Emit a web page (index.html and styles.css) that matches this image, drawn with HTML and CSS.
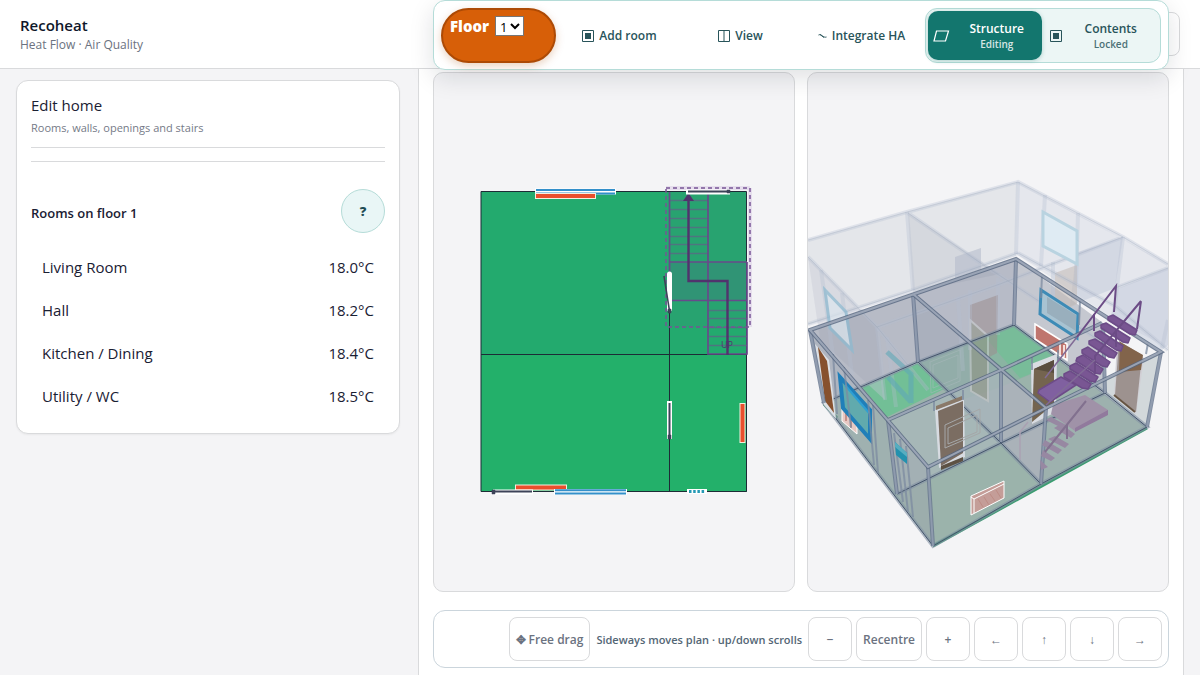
FILE: index.html
```html
<!DOCTYPE html>
<html lang="en">
<head>
<meta charset="utf-8">
<title>Recoheat</title>
<link rel="stylesheet" href="styles.css">
</head>
<body>
<header class="topbar">
  <div class="brand">
    <h1 class="brand-name">Recoheat</h1>
    <p class="brand-sub">Heat Flow · Air Quality</p>
  </div>
  <button class="account" aria-label="Account"></button>
</header>
<div class="layout">
  <aside class="side">
    <section class="card">
      <h2 class="card-title">Edit home</h2>
      <p class="card-sub">Rooms, walls, openings and stairs</p>
      <div class="divider"></div>
      <div class="rooms-head">
        <h3 class="rooms-title">Rooms on floor 1</h3>
        <button class="help">?</button>
      </div>
      <ul class="rooms">
        <li class="room"><span>Living Room</span><span>18.0°C</span></li>
        <li class="room"><span>Hall</span><span>18.2°C</span></li>
        <li class="room"><span>Kitchen / Dining</span><span>18.4°C</span></li>
        <li class="room"><span>Utility / WC</span><span>18.5°C</span></li>
      </ul>
    </section>
  </aside>
  <main class="work">
    <nav class="toolbar">
      <div class="floor">
        <label for="floor">Floor</label>
        <select id="floor" class="floor-select"><option>1</option><option>2</option></select>
      </div>
      <button class="tool"><svg width="12" height="12" viewBox="0 0 12 12"><path d="M.5.5h11v11H.5z" fill="none" stroke="currentColor"/><path d="M3 3h6v6H3z" fill="currentColor"/></svg>Add room</button>
      <button class="tool"><svg width="12" height="12" viewBox="0 0 12 12"><path d="M.5.5h11v11H.5zM6 .5v11" fill="none" stroke="currentColor"/></svg>View</button>
      <button class="tool"><svg width="9" height="12" viewBox="0 0 9 12"><path d="M.5 5c2-1 2.500 0 4 1s2.500 1.500 4 1M2 4.500l4 3" fill="none" stroke="currentColor"/></svg>Integrate HA</button>
      <div class="modes">
        <button class="mode mode-on"><svg width="17" height="12" viewBox="0 0 17 12"><path d="M3.500 1h12l-3 10H1z" fill="none" stroke="currentColor" stroke-width="1.200"/></svg><span class="mode-text">Structure<small class="mode-state">Editing</small></span></button>
        <button class="mode"><svg width="12" height="12" viewBox="0 0 12 12"><path d="M.5.5h11v11H.5z" fill="none" stroke="currentColor"/><path d="M3 3h6v6H3z" fill="currentColor"/></svg><span class="mode-text">Contents<small class="mode-state">Locked</small></span></button>
      </div>
    </nav>
    <div class="views">
      <div class="view">
        <svg class="drawing" viewBox="434 73 360 518" role="img" aria-label="Floor plan">
          <path d="M481 192H747V354H481z" fill="#23aa6e"/>
          <path d="M481 354H747V492H481z" fill="#23b06a"/>
          <path d="M481 191.500H746.500V491.500H481zM481 354.500H747M669.500 192V492" fill="none" stroke="#1d2b36"/>
          <path d="M670 192h77v135h-77z" fill="#714b93" opacity=".07"/>
          <path d="M670 262h77v39h-77z" fill="#5c4a8c" opacity=".16"/>
          <path d="M670 200.500h38M670 209.500h38M670 218.500h38M670 227.500h38M670 236.500h38M670 244.500h38M670 253.500h38M709 310.500h38M709 318.500h38M709 327.500h38M709 336.500h38M709 345.500h38" stroke="#4f7480" stroke-width="1.400"/>
          <path d="M669.500 192v82M708 192v162h39v-92M669 262h78M669 300.500h78" fill="none" stroke="#684a8b" stroke-width="1.700"/>
          <path d="M748 188h4v139h-4zM666 186h84v4h-84z" fill="#e6deed"/>
          <rect x="666" y="188" width="84" height="139" fill="none" stroke="#775495" stroke-width="1.500" stroke-dasharray="4 3"/>
          <path d="M727.500 355v-74H688.500v-82" fill="none" stroke="#51336d" stroke-width="2.400"/>
          <path d="M683 201l5.500-8 5.500 8z" fill="#51336d"/>
          <text x="727" y="348" class="up">UP</text>
          <g fill="none">
            <path d="M535 191.500h81" stroke="#fff" stroke-width="6"/>
            <path d="M536 190h79M536 193.500h79" stroke="#338fca" stroke-width="2"/>
            <path d="M535 196h61M515 487.500h52M742.500 403v40" stroke="#f4efdf" stroke-width="6"/>
            <path d="M536 196h59M516 487.500h50M742.500 404v38" stroke="#e94f2d" stroke-width="4"/>
            <path d="M686 192h44M493 492h40M669.500 401v38" stroke="#fff" stroke-width="5"/>
            <path d="M688 191.500h41M494 491.500h38M669.500 403v34" stroke="#3d4358" stroke-width="2"/>
            <path d="M669.500 274v35" stroke="#fff" stroke-width="5" stroke-linecap="round"/>
            <path d="M664 276l5.500 35" stroke="#3d4358" stroke-width="1.600"/>
            <path d="M554 492h73" stroke="#fff" stroke-width="6"/>
            <path d="M555 490.300h71M555 493.500h71" stroke="#338fca" stroke-width="2"/>
            <path d="M687 491.500h20" stroke="#fff" stroke-width="5"/>
            <path d="M689 491.500h16" stroke="#2599b5" stroke-width="3" stroke-dasharray="2.500 1.700"/>
          </g>
          <path d="M727 190h3v3h-3zM668 309h3v4h-3zM668 435h3v4h-3zM492 490h3v4h-3z" fill="#3d4358" stroke="#3d4358" stroke-width=".5"/>
        </svg>
      </div>
      <div class="view">
        <svg class="drawing" viewBox="808 73 360 518" role="img" aria-label="3D model">
          <defs>
            <path id="topRails" d="M810 330L1016 259L1161 352L1046 408L928 467zM913 294L1046 408M888 420L1001 370L1102 323"/>
            <path id="baseRails" d="M824 403L918 362L1014 325L1105 393L1147 427L1041 484L933 546zM918 362L1001 443L1041 484M897 494L1001 443L1105 393"/>
            <path id="posts" d="M810 330L824 403M1016 259L1014 325M1161 352L1147 427M928 467L933 546M913 294L918 362M1046 408L1041 484M888 420L897 494M1001 370L1001 442M1103 323L1105 393"/>
            <path id="ghostRails" d="M808 240L907 212L1018 182L1123 237L1168 264M808 257L877 327L928 390M908 213L982 264L1100 341M877 327L1000 284L1123 237M808 324L913 290L1018 253M1018 253L1115 306L1168 350M1115 288L1168 268"/>
            <path id="ghostPosts" d="M907 212L913 290M1018 182L1016 254M1045 195L1041 266M1078 213L1076 284M1123 237L1115 304M821 270L833 355M842 293L852 375M877 327L885 400M887 337L896 407M958 297L963 371M1053 262L1053 320M1168 320L1162 348M970 290V350M998 278V335"/>
          </defs>
          <path d="M824 403L1014 325L1147 427L933 546z" fill="#9bb3ab"/>
          <path d="M918 362L1014 325L1062 361L1001 387L958 401z" fill="#8ab4a2"/>
          <path d="M862 387L918 363L944 389L887 417z" fill="#72bf96"/>
          <path d="M985 337L1014 325L1062 361L1020 378z" fill="#78bc99"/>
          <path d="M933 546L1147 428" stroke="#3a9d70" stroke-width="3"/>
          <path d="M824 404L837 418" stroke="#38885f" stroke-width="3"/>
          <path d="M808 240L907 212L1018 182L1016 256L913 290L808 325z" fill="#cdd1da" opacity=".4"/>
          <path d="M1018 182L1168 264V348L1115 320L1016 254z" fill="#cfd5df" opacity=".42"/>
          <path d="M908 213L1000 274L913 292z" fill="#bfc2cd" opacity=".4"/>
          <path d="M1123 237L1076 253L1070 306L1115 288z" fill="#bac4d6" opacity=".42"/>
          <path d="M1117 289L1168 268V345L1161 351L1110 320z" fill="#bac4d6" opacity=".4"/>
          <path d="M808 257L877 327L885 400L820 340z" fill="#c5c9d4" opacity=".4"/>
          <path d="M955 257l26-9v21l-26 9z" fill="#b6bdcb" opacity=".6"/>
          <path d="M810 330L913 294L918 362L862 386L824 403z" fill="#9198a8" opacity=".62"/>
          <path d="M913 294L1016 259L1014 325L918 362z" fill="#9298aa" opacity=".62"/>
          <path d="M1016 259L1103 323L1105 393L1014 325z" fill="#959baa" opacity=".5"/>
          <path d="M913 294L1001 370L1001 443L918 362z" fill="#9ba4b2" opacity=".45"/>
          <path d="M888 420L1001 370L1001 443L897 494z" fill="#aeb9bf" opacity=".6"/>
          <path d="M1001 370L1046 408L1041 484L1001 443z" fill="#b0b2bf" opacity=".7"/>
          <path d="M1046 408L1161 352L1147 427L1041 484z" fill="#9faeb3" opacity=".4"/>
          <path d="M888 420L928 467L933 546L897 494z" fill="#9da4b0" opacity=".35"/>
          <path d="M810 330L888 420L897 494L824 403z" fill="#a4adb8" opacity=".42"/>
          <g opacity=".55">
            <path d="M970 305l28-10-1 58-27 14z" fill="#9c8e8f"/>
            <path d="M970 320l18 16v65l-17-10z" fill="#8d907f" stroke="#c9c9c8" stroke-width="2"/>
            <path d="M1055 273l22-8v39l-22 10z" fill="#c2b9b4"/>
            <path d="M930 362l30-12v31l-29 12zM933 365l25-10v23l-25 10z" fill="none" stroke="#a9b9bd"/>
          </g>
          <use href="#ghostPosts" class="ghost-wide"/>
          <use href="#ghostRails" class="ghost-wide"/>
          <use href="#ghostRails" class="ghost-line"/>
          <path d="M1043 212l34 19v33l-34-18z" fill="#dfebf3" stroke="#b9d3e0" stroke-width="3"/>
          <path d="M825 290l21 22 6 38-22-22z" fill="#dbe6ee" opacity=".7" stroke="#8cbad1" stroke-width="3"/>
          <path d="M887 352l24 22v29M888 377l23 25" fill="none" stroke="#5fa9b8" stroke-width="5" opacity=".6"/>
          <use href="#baseRails" class="base-wide"/>
          <use href="#baseRails" class="rail-dark"/>
          <path d="M815 344l14 16 7 59-12-14z" fill="#dce0e5"/>
          <path d="M818 347l9 14 7 52-9-12z" fill="#87512e"/>
          <path d="M842 407l15 17v10l-15-13z" fill="#e7c8c3" stroke="#fff"/>
          <path d="M846 409v12M851 414v13" stroke="#c68e88" stroke-width="2"/>
          <path d="M840 377l30 33v29l-27-31z" fill="#61aaad" stroke="#207fb9" stroke-width="4"/>
          <path d="M845 385l24 28" stroke="#2e9fd3" stroke-width="2"/>
          <path d="M935 410l29-11 1 58-26 11z" fill="#d7dbe1"/>
          <path d="M938 411l25-10v52l-22 13z" fill="#7b6d62"/>
          <path d="M941 466l22-9v4l-22 9z" fill="#5d5143"/>
          <path d="M936 406l26-10v4l-26 10z" fill="#8a7969"/>
          <path d="M945 425l35-16v24l-35 15zM948 428l29-13v17l-29 12z" fill="none" stroke="#a5a7a8"/>
          <path d="M1031 364l26-10-1 58-24 12z" fill="#d9dce2"/>
          <path d="M1034 369l20-9v44l-22 18z" fill="#74644f"/>
          <path d="M1034 369l20-9v13z" fill="#594e3f"/>
          <path d="M1117 342l27 16-8 56-22-18z" fill="#d1cfd5"/>
          <path d="M1119 341l23 14-6 57-21-17z" fill="#9d928f"/>
          <path d="M1120 342l23 13-2 15-22 2z" fill="#82644b"/>
          <path d="M1114 395l21 17" stroke="#665442" stroke-width="2"/>
          <path d="M1041 290l37 24-1 24-37-24z" fill="#a8c3d2" stroke="#3e8bb6" stroke-width="3"/>
          <path d="M1047 297l29 18v16l-29-18z" fill="#99afbd"/>
          <path d="M1035 324l32 20v16l-32-21z" fill="#bf756e" stroke="#fff" stroke-width="1.500"/>
          <path d="M1060 342v13M1064 345v12" stroke="#f3dfdc" stroke-width="2"/>
          <path d="M971 496l33-15v17l-33 17z" fill="#c49d98" stroke="#fff" stroke-width="1"/>
          <path d="M971 497l3 2 30-15M974 499v14" fill="none" stroke="#fff"/>
          <path d="M978 499l5 8M984 497l5 8M990 494l5 7M996 490l5 8" stroke="#bd8c85" stroke-width="1"/>
          <use href="#posts" class="post-wide"/>
          <use href="#posts" class="post-core"/>
          <path d="M833 354l4 60M844 367l7 61M868 400l6 65M873 405l5 68M894 433l9 69M900 439l8 73M906 446l7 71M1042 275l-1 23M1080 301l-1 24M1148 343l-2 11M1032 357v13M1058 350v12M963 390v10M934 401v10" class="stud"/>
          <path d="M895 442l12 11v11l-11-9z" fill="#2391ae"/>
          <path d="M895 442l12 11v4l-12-10z" fill="#57adc0"/>
          <g fill="#9788a2">
            <path d="M1053 405l32-10 23 15-1 5-32 16-24-17z" fill="#a092a8"/>
            <path d="M1108 410v5l-33 17v-4z" fill="#917a9d"/>
            <path d="M1051 417l15 8-4 3-16-8zM1061 424l14 10-4 4-17-10zM1055 436l14 8-4 4-17-9zM1045 440l17 10-4 4-16-9zM1043 450l12 8-4 3-10-5zM1040 460l8 7-7 3z"/>
          </g>
          <path d="M1020 460v-28l8-10" fill="none" stroke="#aaa1b2" stroke-width="1.500"/>
          <path d="M1045 452l41-51M1067 424v15" fill="none" stroke="#82718f" stroke-width="2"/>
          <use href="#topRails" class="rail-wide"/>
          <use href="#topRails" class="rail-core"/>
          <g fill="#795693" stroke="#6d4c88" stroke-width="1.500" stroke-linejoin="round">
            <path d="M1108 317l5-2 24 15-2 5-5-1-22-14z"/>
            <path d="M1101 325l5-2 24 15-2 5-5-1-22-14z"/>
            <path d="M1095 333l5-2 23 15-2 5-5-1-21-14z"/>
            <path d="M1089 341l6-2 22 14-3 5-5-1-20-13z"/>
            <path d="M1082 350l6-3 22 15-3 5-5-1-20-13z"/>
            <path d="M1077 358l6-3 20 14-3 5-5-1-19-12z"/>
            <path d="M1070 366l6-3 22 14-3 5-5-1-20-12z"/>
            <path d="M1064 374l6-3 21 13-3 5-6-1-18-11z"/>
            <path d="M1039 390l22-13 15 8-26 17-12-9z" fill="#8060a0"/>
          </g>
          <path d="M1077 337L1116 286L1114 312M1141 301L1137 329M1141 301L1095 356V374M1094 314v17M1116 330v17" fill="none" stroke="#6c4c86" stroke-width="2"/>
          <path d="M1077 337L1045 378M1095 360L1046 405" fill="none" stroke="#816b96" stroke-width="1.500"/>
        </svg>
      </div>
    </div>
    <div class="controls">
      <button class="ctl">✥ Free drag</button>
      <span class="hint">Sideways moves plan · up/down scrolls</span>
      <button class="ctl">−</button>
      <button class="ctl">Recentre</button>
      <button class="ctl">+</button>
      <button class="ctl">←</button>
      <button class="ctl">↑</button>
      <button class="ctl">↓</button>
      <button class="ctl">→</button>
    </div>
  </main>
</div>
</body>
</html>
```
FILE: styles.css
```css
* { box-sizing: border-box; }
html, body { height: 100%; }
body {
  margin: 0;
  display: flex;
  flex-direction: column;
  overflow: hidden;
  background: #f4f4f6;
  color: #1a2033;
  font-family: "Open Sans", "Noto Sans", sans-serif;
  font-size: 15px;
}
h1, h2, h3, p, ul { margin: 0; padding: 0; }
button, select { font-family: inherit; color: inherit; }
button { cursor: pointer; }

.topbar {
  flex: none;
  height: 69px;
  display: flex;
  align-items: center;
  justify-content: space-between;
  padding: 0 20px;
  background: #fff;
  border-bottom: 1px solid #d9dadc;
}
.brand { padding-top: 3px; }
.brand-name { font-size: 15px; line-height: 19px; font-weight: 600; color: #0f172a; }
.brand-sub { font-size: 12px; line-height: 20px; color: #6b7280; }
.account { width: 44px; height: 44px; background: #fff; border: 1px solid #d9dadc; border-radius: 8px; }

.layout { flex: 1; min-height: 0; display: flex; }
.side { width: 418px; flex: none; padding: 11px 18px 0 16px; }
.card {
  padding: 13px 14px 16px;
  background: #fff;
  border: 1px solid #d9dadc;
  border-radius: 12px;
  box-shadow: 0 1px 2px rgba(0, 0, 0, .05);
}
.card-title { font-size: 15px; line-height: 22px; font-weight: 400; }
.card-sub { font-size: 11px; line-height: 18px; margin-top: 3px; color: #757a87; }
.divider { height: 15px; margin-top: 10px; border: solid #d9dadc; border-width: 1px 0; }
.rooms-head { display: flex; align-items: center; justify-content: space-between; margin: 27px 0 12px; }
.rooms-title { padding-top: 3px; font-size: 13px; font-weight: 600; }
.help {
  width: 44px;
  height: 44px;
  padding: 0;
  border: 1px solid #b5dcd8;
  border-radius: 50%;
  background: #e9f6f6;
  color: #1f4e55;
  font-size: 13px;
  font-weight: 800;
}
.rooms { list-style: none; }
.room { display: flex; align-items: center; justify-content: space-between; height: 43px; padding: 0 11px; }

.work {
  flex: 1;
  min-width: 0;
  position: relative;
  margin-right: 16px;
  padding: 3px 14px 8px;
  display: flex;
  flex-direction: column;
  gap: 18px;
  background: #fff;
  border: solid #d9dadc;
  border-width: 0 1px;
}
.toolbar {
  position: absolute;
  z-index: 2;
  left: 14px;
  right: 14px;
  bottom: calc(100% - 1px);
  height: 70px;
  display: grid;
  grid-template-columns: repeat(4, 1fr) 236px;
  gap: 6px;
  padding: 7px 7px 6px;
  background: #fff;
  border: 1px solid #b5dcd8;
  border-radius: 12px;
  box-shadow: 0 8px 24px rgba(15, 23, 42, .13);
}
.floor {
  padding: 6px 7px;
  border: 2px solid #ad4a05;
  border-radius: 28px;
  background: #d75f08;
  color: #fff;
  font-size: 15px;
  font-weight: 800;
  line-height: 20px;
  box-shadow: 0 3px 8px rgba(173, 74, 5, .25);
  display: flex;
  align-items: flex-start;
  gap: 6px;
}
.floor-select { width: 29px; height: 20px; padding: 0; border: 1px solid #767676; border-radius: 0; background: #fff; color: #000; font-size: 13px; }
.tool {
  display: flex;
  align-items: center;
  justify-content: center;
  gap: 5px;
  padding: 0;
  border: 0;
  background: none;
  color: #28545a;
  font-size: 12px;
  font-weight: 600;
  white-space: nowrap;
}
.modes { display: grid; grid-template-columns: 1fr 1fr; gap: 3px; padding: 2px; border: 1px solid #b5dcd8; border-radius: 12px; background: #ecf6f5; }
.mode {
  display: flex;
  align-items: center;
  padding: 0 0 0 3px;
  border: 0;
  border-radius: 10px;
  background: none;
  color: #28545a;
  font-size: 12px;
  font-weight: 600;
}
.mode svg { flex: none; margin: 0 2px; }
.mode-on { background: #13766e; color: #fff; box-shadow: 0 1px 4px rgba(19, 118, 110, .3); }
.mode-text { flex: 1; display: flex; flex-direction: column; line-height: 17px; }
.mode-state { font-size: 10px; line-height: 14px; opacity: .82; }

.views { display: grid; grid-template-columns: 1fr 1fr; gap: 12px; }
.view { overflow: hidden; background: #f4f4f6; border: 1px solid #d9dadc; border-radius: 10px; }
.drawing { display: block; width: 100%; height: auto; }
.up { font-size: 9px; fill: #51336d; text-anchor: middle; }
.ghost-wide { fill: none; stroke: #b3bfd0; stroke-width: 4; opacity: .32; }
.ghost-line { fill: none; stroke: #929eb4; stroke-width: 1; opacity: .3; }
.base-wide { fill: none; stroke: #8291a4; stroke-width: 4; opacity: .6; }
.post-wide { fill: none; stroke: #66768f; stroke-width: 4; opacity: .8; }
.post-core { fill: none; stroke: #95a0b3; stroke-width: 2; opacity: .8; }
.rail-wide { fill: none; stroke: #56677f; stroke-width: 4; opacity: .8; }
.rail-core { fill: none; stroke: #a3adbd; stroke-width: 2; opacity: .85; }
.rail-dark { fill: none; stroke: #44546b; stroke-width: 1; }
.stud { fill: none; stroke: #7c8ba0; stroke-width: 2; opacity: .75; }

.controls {
  display: flex;
  align-items: center;
  justify-content: flex-end;
  gap: 4px;
  padding: 6px;
  border: 1px solid #cbd5dc;
  border-radius: 12px;
}
.ctl {
  min-width: 44px;
  height: 44px;
  padding: 0 6px;
  border: 1px solid #d9dadc;
  border-radius: 8px;
  background: #fff;
  color: #6b7280;
  font-size: 12px;
  font-weight: 600;
  white-space: nowrap;
}
.hint { padding: 0 2px; color: #536675; font-size: 11px; font-weight: 600; white-space: nowrap; }
```
